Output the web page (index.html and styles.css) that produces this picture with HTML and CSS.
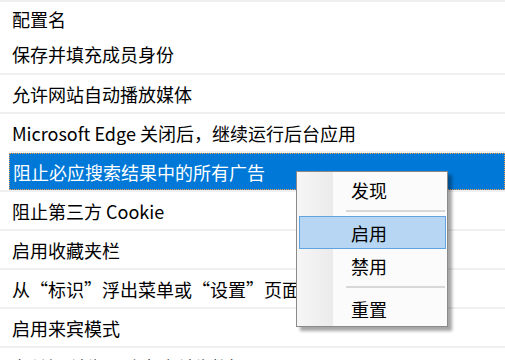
FILE: index.html
```html
<!DOCTYPE html>
<html lang="zh-CN">
<head>
    <meta charset="UTF-8">
    <title>策略列表</title>
    <link rel="stylesheet" href="styles.css">
</head>
<body>
    <div class="list">
        <div class="row head">配置名</div>
        <div class="row first">保存并填充成员身份</div>
        <div class="row">允许网站自动播放媒体</div>
        <div class="row">Microsoft Edge 关闭后，继续运行后台应用</div>
        <div class="row sel"><span class="focus">阻止必应搜索结果中的所有广告</span></div>
        <div class="row">阻止第三方 Cookie</div>
        <div class="row">启用收藏夹栏</div>
        <div class="row">从“标识”浮出菜单或“设置”页面启用同步</div>
        <div class="row">启用来宾模式</div>
        <div class="row">在关闭浏览器时清除浏览数据</div>
    </div>

    <div class="menu">
        <div class="item">发现</div>
        <div class="sep"></div>
        <div class="item hot">启用</div>
        <div class="item">禁用</div>
        <div class="sep"></div>
        <div class="item">重置</div>
    </div>
</body>
</html>
```

FILE: styles.css
```css
body {
    margin: 0;
    background: #fff;
    font-family: "Noto Sans CJK SC", "Noto Sans", sans-serif;
    font-size: 18px;
    color: #000;
    overflow: hidden;
}
.list {
    border-top: 2px solid #f0f0f0;
}
.row {
    display: flex;
    align-items: center;
    height: 37px;
    padding-left: 12px;
    border-top: 2px solid #f0f0f0;
    white-space: nowrap;
}
.row.head {
    height: 33px;
    border-top: none;
}
.row.first {
    height: 38px;
    border-top: none;
}
.row.sel {
    margin-left: 9px;
    padding-left: 0;
    background: #0078d7;
    color: #fff;
}
.row.sel .focus {
    display: flex;
    align-items: center;
    box-sizing: border-box;
    width: 100%;
    height: 100%;
    padding-left: 3px;
    border: 1px dotted #f0a050;
}
.menu {
    position: absolute;
    left: 296px;
    top: 171px;
    width: 150px;
    padding: 1px 0;
    border: 1px solid #8a8a8a;
    background: linear-gradient(to right, #f6f6f6, #ebebeb 36px, #fbfbfb 36px);
    box-shadow: 4px 4px 3px rgba(0, 0, 0, 0.35);
}
.item {
    display: flex;
    align-items: center;
    height: 33px;
    box-sizing: border-box;
    margin: 0 1px 0 2px;
    padding-left: 51px;
    border: 1px solid transparent;
}
.item.hot {
    background: #b6d6f3;
    border-color: #62a3e2;
}
.sep {
    height: 10px;
    margin-left: 49px;
    margin-right: 2px;
    background: linear-gradient(#d8d8d8, #d8d8d8) 0 4px / 100% 2px no-repeat;
}
```
